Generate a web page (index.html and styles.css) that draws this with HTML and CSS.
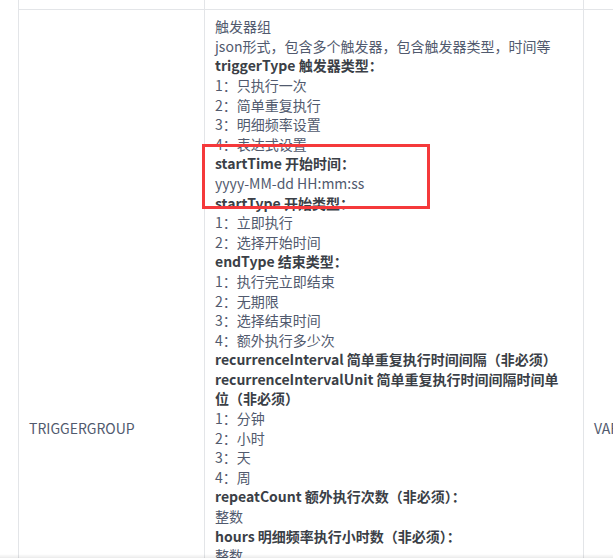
FILE: index.html
```html
<!DOCTYPE html>
<html lang="zh-CN">
<head>
  <meta charset="UTF-8">
  <meta name="viewport" content="width=device-width, initial-scale=1.0">
  <title>参数说明</title>
  <link rel="stylesheet" href="styles.css">
</head>
<body>
  <div class="page">
    <table class="params">
      <colgroup>
        <col class="col-name">
        <col class="col-desc">
        <col class="col-type">
      </colgroup>
      <tr>
        <td>GROUPNAME</td>
        <td class="desc-cell">
          <div class="line">任务分组名称</div>
          <div class="line">触发器组名</div>
        </td>
        <td>VARCHAR(100)</td>
      </tr>
      <tr>
        <td>TRIGGERGROUP</td>
        <td class="desc-cell">
          <div class="desc">
            <div class="line">触发器组</div>
            <div class="line">json形式，包含多个触发器，包含触发器类型，时间等</div>
            <div class="line"><strong>triggerType 触发器类型：</strong></div>
            <div class="line">1：只执行一次</div>
            <div class="line">2：简单重复执行</div>
            <div class="line">3：明细频率设置</div>
            <div class="line">4：表达式设置</div>
            <div class="line"><strong>startTime 开始时间：</strong></div>
            <div class="line">yyyy-MM-dd HH:mm:ss</div>
            <div class="line"><strong>startType 开始类型：</strong></div>
            <div class="line">1：立即执行</div>
            <div class="line">2：选择开始时间</div>
            <div class="line"><strong>endType 结束类型：</strong></div>
            <div class="line">1：执行完立即结束</div>
            <div class="line">2：无期限</div>
            <div class="line">3：选择结束时间</div>
            <div class="line">4：额外执行多少次</div>
            <div class="line"><strong>recurrenceInterval 简单重复执行时间间隔（非必须）</strong></div>
            <div class="line"><strong>recurrenceIntervalUnit 简单重复执行时间间隔时间单<br>位（非必须）</strong></div>
            <div class="line">1：分钟</div>
            <div class="line">2：小时</div>
            <div class="line">3：天</div>
            <div class="line">4：周</div>
            <div class="line"><strong>repeatCount 额外执行次数（非必须）：</strong></div>
            <div class="line">整数</div>
            <div class="line"><strong>hours 明细频率执行小时数（非必须）：</strong></div>
            <div class="line">整数</div>
            <div class="line"><strong>minutes 明细频率执行分钟数（非必须）：</strong></div>
            <div class="line">整数</div>
            <div class="line"><strong>days 明细频率执行天数（非必须）：</strong></div>
            <div class="line">整数</div>
            <div class="line"><strong>weekDays 明细频率执行周几（非必须）：</strong></div>
            <div class="line">1：周一</div>
            <div class="line">2：周二</div>
            <div class="line">3：周三</div>
            <div class="line">4：周四</div>
            <div class="line">5：周五</div>
            <div class="line">6：周六</div>
            <div class="line">7：周日</div>
            <div class="line"><strong>cronExpression 表达式（非必须）：</strong></div>
            <div class="line">cron表达式字符串</div>
            <!-- annotation box drawn over the startTime lines -->
            <span class="mark"></span>
          </div>
        </td>
        <td>VARCHAR(2000)</td>
      </tr>
    </table>
  </div>
  <div class="scroll-shadow"></div>
</body>
</html>
```

FILE: styles.css
```css
html, body {
  margin: 0;
  padding: 0;
  height: 100%;
  overflow: hidden;
  background-color: #fff;
}
body {
  font-family: "Noto Sans CJK SC", "Noto Sans", sans-serif;
  font-size: 14px;
  line-height: 1.4;
  color: #515a6e;
}
.page {
  padding-left: 18px;
}
.params {
  border-collapse: collapse;
  table-layout: fixed;
  width: 766px;
  margin-top: -45px;
}
.col-name {
  width: 186px;
}
.col-desc {
  width: 379px;
}
.col-type {
  width: 201px;
}
.params td {
  border: 1px solid #e3e5e8;
  padding: 7px 10px;
  vertical-align: middle;
  white-space: nowrap;
}
.desc {
  position: relative;
}
.line strong {
  font-weight: bold;
  color: #3b3f47;
}
.mark {
  position: absolute;
  left: -13px;
  top: 127px;
  width: 222px;
  height: 59px;
  border: 3px solid #f5393b;
}
.scroll-shadow {
  position: fixed;
  left: 0;
  right: 0;
  bottom: 0;
  height: 4px;
  background: linear-gradient(to bottom, rgba(0, 0, 0, 0), rgba(0, 0, 0, 0.08));
}
```
